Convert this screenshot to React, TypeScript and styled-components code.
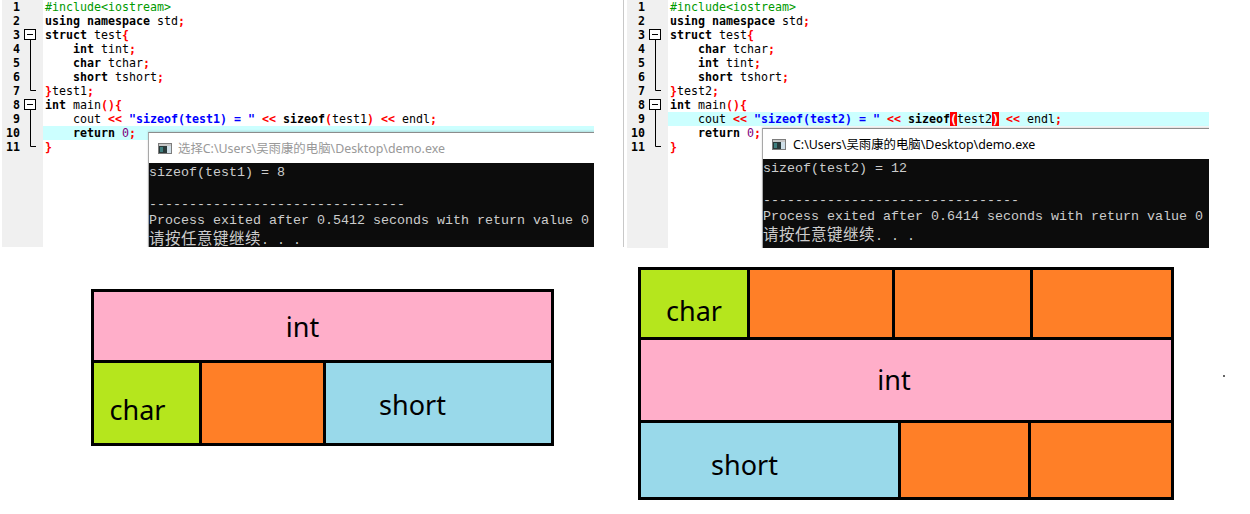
import React from 'react';
import styled, { createGlobalStyle } from 'styled-components';

const GlobalStyle = createGlobalStyle`
  html, body { margin: 0; padding: 0; background: #fff; }
  body { width: 1250px; height: 514px; overflow: hidden; }
`;

type Kind = 'pp' | 'kw' | 'id' | 'sym' | 'str' | 'num' | 'match';
type Tok = [string, Kind];
type Fold = 'none' | 'open' | 'mid' | 'end';

const Page = styled.div`
  width: 1250px;
  height: 514px;
  background: #fff;
  display: flex;
  flex-direction: column;
`;

const TopRow = styled.div`
  display: flex;
  align-items: flex-start;
  padding-left: 2px;
`;

const Pane = styled.div<{ $w: number; $h: number }>`
  position: relative;
  flex: none;
  width: ${(p) => p.$w}px;
  height: ${(p) => p.$h}px;
  overflow: hidden;
  display: flex;
  background: #fff;
`;

const Separator = styled.div`
  flex: none;
  width: 1px;
  height: 247px;
  margin: 0 3px 0 29px;
  background: #c8c8c8;
`;

const Gutter = styled.div`
  flex: none;
  width: 41px;
  background: #f0f0f0;
  display: flex;
  flex-direction: column;
`;

const GutterRow = styled.div`
  height: 14px;
  display: grid;
  grid-template-columns: 18px 23px;
  align-items: center;
`;

const LineNo = styled.span`
  font-family: "DejaVu Sans Mono", monospace;
  font-size: 11.63px;
  font-weight: bold;
  line-height: 14px;
  text-align: right;
  color: #000;
`;

const Code = styled.div`
  flex: 1;
  display: flex;
  flex-direction: column;
`;

const CodeLine = styled.div<{ $hl?: boolean }>`
  height: 14px;
  padding-left: 2px;
  white-space: pre;
  font-family: "DejaVu Sans Mono", monospace;
  font-size: 11.63px;
  line-height: 14px;
  background: ${(p) => (p.$hl ? '#ccffff' : 'transparent')};
`;

const tokColor: Record<Kind, string> = {
  pp: '#009a00',
  kw: '#000',
  id: '#000',
  sym: '#ff0000',
  str: '#0000ff',
  num: '#800080',
  match: '#ffffff',
};

const T = styled.span<{ $k: Kind }>`
  color: ${(p) => tokColor[p.$k]};
  font-weight: ${(p) => (p.$k === 'kw' || p.$k === 'sym' || p.$k === 'str' || p.$k === 'match' ? 'bold' : 'normal')};
  background: ${(p) => (p.$k === 'match' ? '#ff0000' : 'transparent')};
`;

const ConsoleWin = styled.div<{ $left: number; $top: number }>`
  position: absolute;
  left: ${(p) => p.$left}px;
  top: ${(p) => p.$top}px;
  width: 520px;
  height: 200px;
  border-top: 1px solid #8c8c8c;
  border-left: 1px solid #a8a8a8;
  background: #fff;
  display: flex;
  flex-direction: column;
  box-shadow: 0 -1px 2px rgba(0, 0, 0, 0.15);
`;

const TitleBar = styled.div<{ $gap: number; $h: number }>`
  height: ${(p) => p.$h}px;
  flex: none;
  display: flex;
  align-items: center;
  gap: ${(p) => p.$gap}px;
  padding-left: 9px;
  background: #fff;
`;

const TitleText = styled.span<{ $dim?: boolean }>`
  font-family: "Noto Sans", "Noto Sans CJK SC", sans-serif;
  font-size: 12.4px;
  color: ${(p) => (p.$dim ? '#999999' : '#000000')};
  white-space: nowrap;
`;

const ConsoleBody = styled.div`
  flex: 1;
  background: #0c0c0c;
  padding-top: 2px;
  display: flex;
  flex-direction: column;
`;

const ConsoleLine = styled.div`
  height: 16px;
  line-height: 16px;
  white-space: pre;
  font-family: "Liberation Mono", monospace;
  font-size: 13.33px;
  color: #cccccc;
`;

const Cjk = styled.span`
  font-family: "Noto Sans CJK SC", sans-serif;
  font-size: 15.5px;
  line-height: 16px;
  letter-spacing: 0.5px;
`;

const BottomRow = styled.div`
  display: flex;
  align-items: flex-start;
`;

const Diagram = styled.div<{ $w: number; $h: number; $ml: number; $mt: number; $rows: string }>`
  flex: none;
  width: ${(p) => p.$w}px;
  height: ${(p) => p.$h}px;
  margin-left: ${(p) => p.$ml}px;
  margin-top: ${(p) => p.$mt}px;
  box-sizing: border-box;
  padding: 3px;
  background: #000;
  display: grid;
  grid-template-rows: ${(p) => p.$rows};
  row-gap: 3px;
`;

const DRow = styled.div<{ $cols: string }>`
  display: grid;
  grid-template-columns: ${(p) => p.$cols};
  column-gap: 3px;
`;

const Cell = styled.div<{ $bg: string }>`
  background: ${(p) => p.$bg};
  display: flex;
  align-items: center;
  justify-content: center;
  overflow: hidden;
`;

const Label = styled.span<{ $dx: number; $dy: number }>`
  font-family: "Noto Sans", sans-serif;
  font-size: 27px;
  line-height: 1;
  color: #000;
  margin-left: ${(p) => (p.$dx > 0 ? p.$dx * 2 : 0)}px;
  margin-right: ${(p) => (p.$dx < 0 ? -p.$dx * 2 : 0)}px;
  margin-top: ${(p) => (p.$dy > 0 ? p.$dy * 2 : 0)}px;
  margin-bottom: ${(p) => (p.$dy < 0 ? -p.$dy * 2 : 0)}px;
`;

const Dot = styled.div`
  flex: none;
  width: 2px;
  height: 2px;
  margin-left: 49px;
  margin-top: 127px;
  background: #666;
`;

const PINK = '#ffaec9';
const GREEN = '#b5e61d';
const ORANGE = '#ff7f27';
const BLUE = '#99d9ea';

const FoldMark: React.FC<{ f: Fold }> = ({ f }) => (
  <svg width="23" height="14" viewBox="0 0 23 14" style={{ display: 'block' }}>
    {f === 'open' && (
      <>
        <rect x="4.5" y="1.5" width="11" height="10" fill="#fff" stroke="#000" />
        <line x1="7" y1="6.5" x2="13" y2="6.5" stroke="#000" />
        <line x1="10.5" y1="11.5" x2="10.5" y2="14" stroke="#000" />
      </>
    )}
    {f === 'mid' && <line x1="10.5" y1="0" x2="10.5" y2="14" stroke="#000" />}
    {f === 'end' && <path d="M10.5 0 V6.5 H16" fill="none" stroke="#000" />}
  </svg>
);

const ConsoleIcon: React.FC = () => (
  <svg width="14" height="11" viewBox="0 0 14 11" style={{ display: 'block' }}>
    <rect x="0.5" y="0.5" width="13" height="10" fill="#e8e8e8" stroke="#7c7c7c" />
    <rect x="1" y="1" width="12" height="2" fill="#c8c8c8" />
    <rect x="1" y="3" width="8" height="7" fill="#2a3a3a" />
    <rect x="2" y="4" width="3" height="5" fill="#3f7f7f" />
    <rect x="9" y="3" width="4" height="7" fill="#cfdfe8" />
  </svg>
);

const folds: Fold[] = ['none', 'none', 'open', 'mid', 'mid', 'mid', 'end', 'open', 'mid', 'mid', 'end'];

const makeLines = (n: string, first: [string, string], second: [string, string], matchParens: boolean): Tok[][] => [
  [['#include<iostream>', 'pp']],
  [['using', 'kw'], [' ', 'id'], ['namespace', 'kw'], [' std', 'id'], [';', 'sym']],
  [['struct', 'kw'], [' test', 'id'], ['{', 'sym']],
  [['    ', 'id'], [first[0], 'kw'], [' ' + first[1], 'id'], [';', 'sym']],
  [['    ', 'id'], [second[0], 'kw'], [' ' + second[1], 'id'], [';', 'sym']],
  [['    ', 'id'], ['short', 'kw'], [' tshort', 'id'], [';', 'sym']],
  [['}', 'sym'], ['test' + n, 'id'], [';', 'sym']],
  [['int', 'kw'], [' main', 'id'], ['(){', 'sym']],
  [
    ['    cout ', 'id'], ['<<', 'sym'], [' ', 'id'], ['"sizeof(test' + n + ') = "', 'str'], [' ', 'id'],
    ['<<', 'sym'], [' ', 'id'], ['sizeof', 'kw'], ['(', matchParens ? 'match' : 'sym'], ['test' + n, 'id'],
    [')', matchParens ? 'match' : 'sym'], [' ', 'id'], ['<<', 'sym'], [' endl', 'id'], [';', 'sym'],
  ],
  [['    ', 'id'], ['return', 'kw'], [' ', 'id'], ['0', 'num'], [';', 'sym']],
  [['}', 'sym']],
];

const Editor: React.FC<{
  w: number;
  h: number;
  lines: Tok[][];
  hl: number;
  children?: React.ReactNode;
}> = ({ w, h, lines, hl, children }) => (
  <Pane $w={w} $h={h}>
    <Gutter>
      {lines.map((_, i) => (
        <GutterRow key={i}>
          <LineNo>{i + 1}</LineNo>
          <FoldMark f={folds[i]} />
        </GutterRow>
      ))}
    </Gutter>
    <Code>
      {lines.map((toks, i) => (
        <CodeLine key={i} $hl={i === hl}>
          {toks.map(([t, k], j) => (
            <T key={j} $k={k}>
              {t}
            </T>
          ))}
        </CodeLine>
      ))}
    </Code>
    {children}
  </Pane>
);

const ConsoleOut: React.FC<{ n: string; size: string; time: string }> = ({ n, size, time }) => (
  <ConsoleBody>
    <ConsoleLine>{`sizeof(test${n}) = ${size}`}</ConsoleLine>
    <ConsoleLine> </ConsoleLine>
    <ConsoleLine>{'--------------------------------'}</ConsoleLine>
    <ConsoleLine>{`Process exited after ${time} seconds with return value 0`}</ConsoleLine>
    <ConsoleLine>
      <Cjk>请按任意键继续</Cjk>. . .
    </ConsoleLine>
  </ConsoleBody>
);

export default function App() {
  const left = makeLines('1', ['int', 'tint'], ['char', 'tchar'], false);
  const right = makeLines('2', ['char', 'tchar'], ['int', 'tint'], true);
  return (
    <Page>
      <GlobalStyle />
      <TopRow>
        <Editor w={592} h={247} lines={left} hl={9}>
          <ConsoleWin $left={146} $top={132}>
            <TitleBar $gap={6} $h={30}>
              <ConsoleIcon />
              <TitleText $dim>{'选择C:\\Users\\吴雨康的电脑\\Desktop\\demo.exe'}</TitleText>
            </TitleBar>
            <ConsoleOut n="1" size="8" time="0.5412" />
          </ConsoleWin>
        </Editor>
        <Separator />
        <Editor w={582} h={248} lines={right} hl={8}>
          <ConsoleWin $left={135} $top={128}>
            <TitleBar $gap={7} $h={30}>
              <ConsoleIcon />
              <TitleText>{'C:\\Users\\吴雨康的电脑\\Desktop\\demo.exe'}</TitleText>
            </TitleBar>
            <ConsoleOut n="2" size="12" time="0.6414" />
          </ConsoleWin>
        </Editor>
      </TopRow>
      <BottomRow>
        <Diagram $w={463} $h={157} $ml={91} $mt={41} $rows="68px 80px">
          <DRow $cols="1fr">
            <Cell $bg={PINK}>
              <Label $dx={-20} $dy={0}>int</Label>
            </Cell>
          </DRow>
          <DRow $cols="105px 121px 225px">
            <Cell $bg={GREEN}>
              <Label $dx={-9} $dy={6}>char</Label>
            </Cell>
            <Cell $bg={ORANGE} />
            <Cell $bg={BLUE}>
              <Label $dx={-26} $dy={1}>short</Label>
            </Cell>
          </DRow>
        </Diagram>
        <Diagram $w={536} $h={233} $ml={84} $mt={19} $rows="67px 80px 74px">
          <DRow $cols="106px 142px 135px 138px">
            <Cell $bg={GREEN}>
              <Label $dx={0} $dy={7}>char</Label>
            </Cell>
            <Cell $bg={ORANGE} />
            <Cell $bg={ORANGE} />
            <Cell $bg={ORANGE} />
          </DRow>
          <DRow $cols="1fr">
            <Cell $bg={PINK}>
              <Label $dx={-12} $dy={-0.5}>int</Label>
            </Cell>
          </DRow>
          <DRow $cols="257px 127px 140px">
            <Cell $bg={BLUE}>
              <Label $dx={-25} $dy={4}>short</Label>
            </Cell>
            <Cell $bg={ORANGE} />
            <Cell $bg={ORANGE} />
          </DRow>
        </Diagram>
        <Dot />
      </BottomRow>
    </Page>
  );
}
